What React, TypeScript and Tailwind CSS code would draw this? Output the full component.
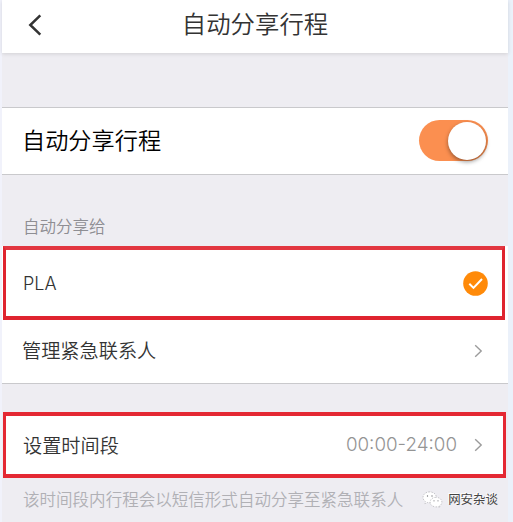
import type { ReactNode } from "react";

function Chevron() {
  return (
    <svg className="h-[14px] w-[9px]" viewBox="0 0 9 14" fill="none" stroke="#9b9b9b" strokeWidth="1.4">
      <path d="M1.2 1.2 7.2 7 1.2 12.8" />
    </svg>
  );
}

function Label({ children }: { children: ReactNode }) {
  return <span className="pt-px text-[19.2px] font-[350] leading-7 text-[#333]">{children}</span>;
}

function WeChatMark() {
  return (
    <svg className="h-[18px] w-[21px]" viewBox="0 0 21 18" fill="#fff" stroke="#a5a5aa" strokeWidth="0.6" strokeDasharray="1.5 1.2">
      <path d="M7.7.9C3.9.9 1 3.3 1 6.4c0 1.8 1 3.3 2.5 4.3l-.6 2 2.4-1.2c.8.2 1.6.3 2.4.3 3.8 0 6.7-2.4 6.7-5.4S11.5.9 7.7.9Z" />
      <path d="M14 6.3c-3.3 0-5.9 2.1-5.9 4.800s2.600 4.800 5.900 4.800c.7 0 1.400-.1 2-.3l2 1-.5-1.700c1.500-.9 2.400-2.200 2.400-3.800 0-2.700-2.600-4.800-5.900-4.800Z" />
      <g fill="#77777c" stroke="none">
        <circle cx="5.5" cy="5" r=".7" />
        <circle cx="10" cy="5" r=".7" />
        <circle cx="12" cy="9.8" r=".6" />
        <circle cx="16" cy="9.8" r=".6" />
      </g>
    </svg>
  );
}

export default function App() {
  return (
    <div className="h-[522px] w-[513px] overflow-hidden bg-[#ebf1fa] font-['Inter','Noto_Sans_CJK_SC',sans-serif] font-[350]">
      <div className="flex h-full w-[508px] flex-col border-l-2 border-[#f1f2fb] bg-[#eeedf2]">
        <header className="grid h-[53px] shrink-0 grid-cols-[1fr_auto_1fr] items-center bg-white pb-[5px] shadow-[0_1px_4px_rgba(0,0,0,0.12)]">
          <svg className="ml-[26px] mt-[2px] h-[22px] w-[14px]" viewBox="0 0 14 22" fill="none" stroke="#333" strokeWidth="2.5">
            <path d="M12.3 1.3 2.3 11l10 9.7" />
          </svg>
          <h1 className="text-[24.4px] font-[350] leading-8 text-[#333]">自动分享行程</h1>
        </header>

        <section className="mt-[54px] flex h-[68px] shrink-0 items-center justify-between border-y border-[#c9c9cc] bg-white pl-5 pr-[20px]">
          <span className="text-[23.2px] leading-8 text-black">自动分享行程</span>
          <div className="mb-px flex h-[41px] w-[69px] items-center justify-end rounded-full bg-[#fb8f50] pr-[2px]">
            <div className="size-[38px] rounded-full bg-white shadow-[0_2px_4px_rgba(0,0,0,0.4)]" />
          </div>
        </section>

        <p className="mt-[40px] h-[31px] shrink-0 pl-[21px] text-[16.5px] leading-6 text-[#8e8e93]">自动分享给</p>

        <section className="flex h-[138px] shrink-0 flex-col border-b border-[#c9c9cc] bg-white">
          <div className="ml-px mr-[3px] flex h-[74px] shrink-0 items-center justify-between border-x-[3px] border-y-4 border-t-[#e23640] border-x-[#df242f] border-b-[#df242f] pl-[17px] pr-[14px]">
            <span className="pt-px text-[18px] leading-7 text-[#333]">PLA</span>
            <svg className="size-[25px]" viewBox="0 0 25 25" fill="none">
              <circle cx="12.5" cy="12.5" r="12.3" fill="#ff8a09" />
              <path d="m6.3 12.7 4.2 4.2 8.5-8.900" stroke="#fff" strokeWidth="2" />
            </svg>
          </div>
          <div className="flex h-[61px] items-center justify-between pl-5 pr-[25px]">
            <Label>管理紧急联系人</Label>
            <Chevron />
          </div>
        </section>

        <section className="ml-px mr-[2px] mt-[28px] flex h-[66px] shrink-0 items-center border-x-[3px] border-y-4 border-[#e42833] bg-white pl-[17px] pr-[20px]">
          <Label>设置时间段</Label>
          <span className="ml-auto mr-[17px] text-[18.8px] leading-7 text-[#949494]">00:00-24:00</span>
          <Chevron />
        </section>

        <footer className="flex shrink-0 items-center pl-[21px] pt-[10px]">
          <p className="whitespace-nowrap text-[16.55px] leading-6 text-[#b0b0b5]">该时间段内行程会以短信形式自动分享至紧急联系人</p>
          <div className="ml-[19px] flex items-center gap-[5px]">
            <WeChatMark />
            <span className="whitespace-nowrap text-[12.4px] font-normal leading-5 text-[#444] [text-shadow:-1px_-1px_0_#fff]">网安杂谈</span>
          </div>
        </footer>
      </div>
    </div>
  );
}
